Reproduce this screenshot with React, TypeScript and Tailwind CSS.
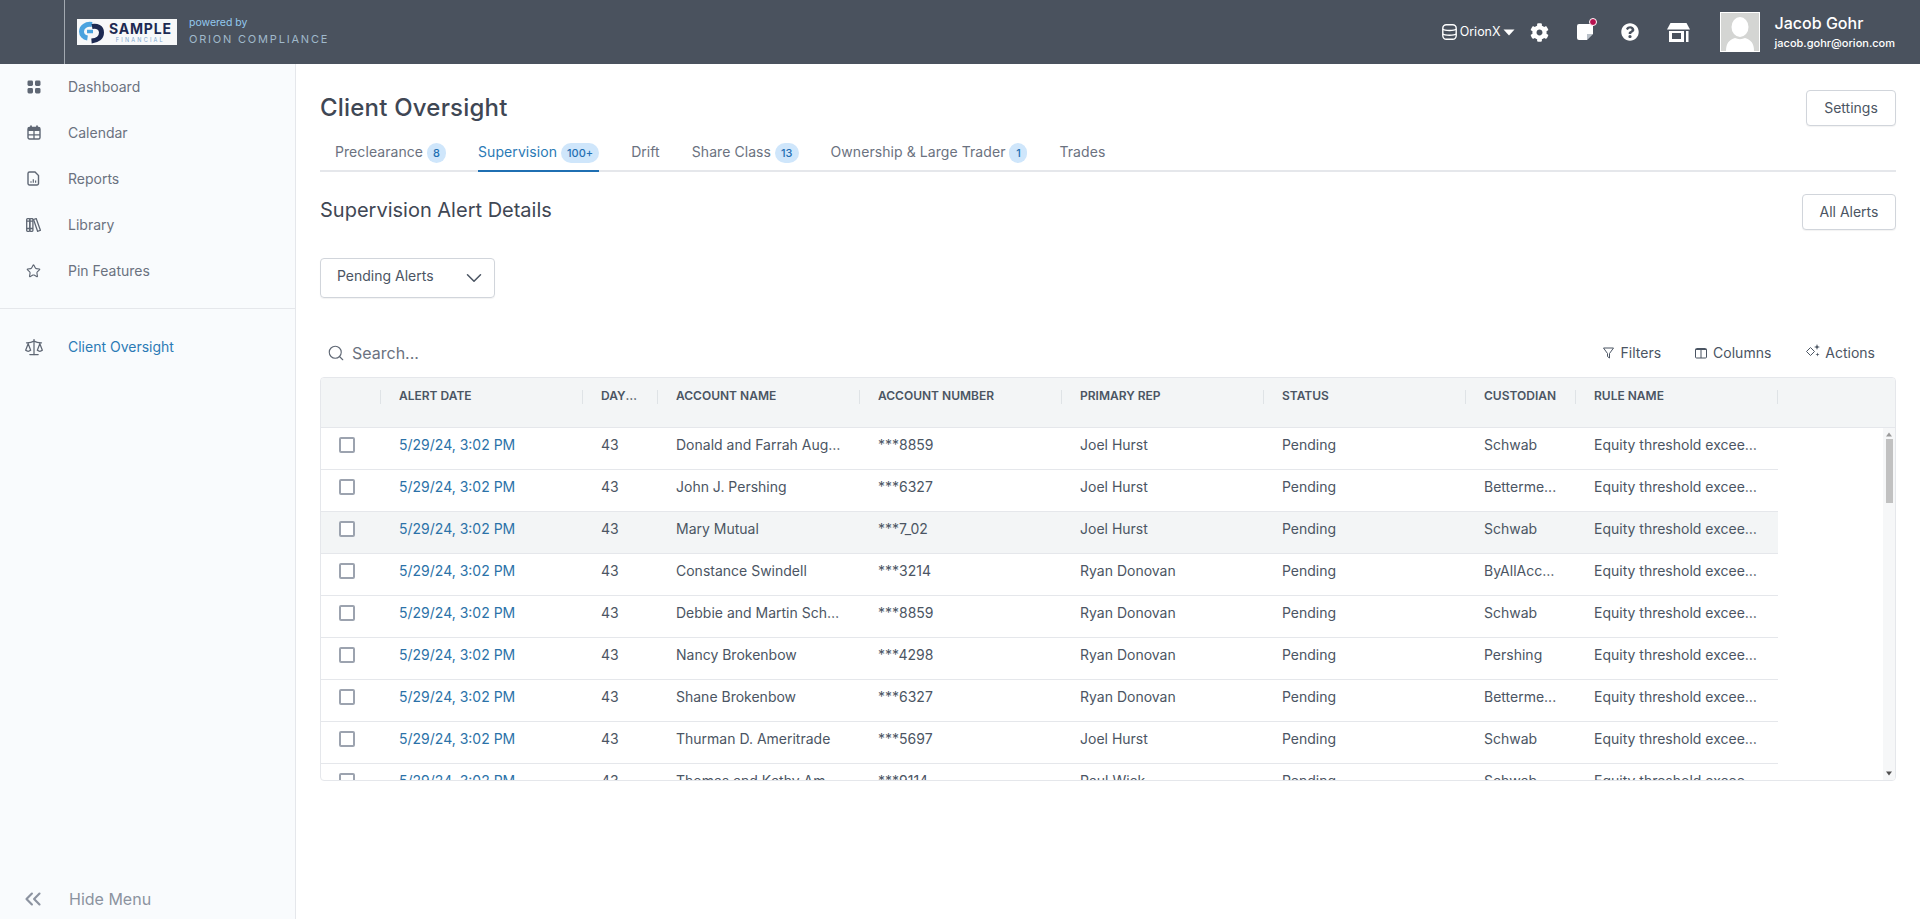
import { ChevronDown, ChevronsLeft, Search, Star, Scale } from "lucide-react";
import { FaCog, FaQuestionCircle } from "react-icons/fa";

const NAV = [
  { label: "Dashboard", icon: <DashIcon /> },
  { label: "Calendar", icon: <CalIcon /> },
  { label: "Reports", icon: <ReportIcon /> },
  { label: "Library", icon: <LibIcon /> },
  { label: "Pin Features", icon: <Star size={16} strokeWidth={1.8} /> },
];

const TABS = [
  { label: "Preclearance", badge: "8" },
  { label: "Supervision", badge: "100+", active: true },
  { label: "Drift" },
  { label: "Share Class", badge: "13" },
  { label: "Ownership & Large Trader", badge: "1" },
  { label: "Trades" },
];

const COLS = [
  { label: "Alert Date", w: "w-[202px]" },
  { label: "Days Pending", w: "w-[75px]" },
  { label: "Account Name", w: "w-[202px]" },
  { label: "Account Number", w: "w-[202px]" },
  { label: "Primary Rep", w: "w-[202px]" },
  { label: "Status", w: "w-[202px]" },
  { label: "Custodian", w: "w-[110px]" },
  { label: "Rule Name", w: "w-[202px]" },
];

const ROWS = [
  ["Donald and Farrah Augustine", "***8859", "Joel Hurst", "Schwab"],
  ["John J. Pershing", "***6327", "Joel Hurst", "Betterme..."],
  ["Mary Mutual", "***7_02", "Joel Hurst", "Schwab"],
  ["Constance Swindell", "***3214", "Ryan Donovan", "ByAllAccounts"],
  ["Debbie and Martin Schwab", "***8859", "Ryan Donovan", "Schwab"],
  ["Nancy Brokenbow", "***4298", "Ryan Donovan", "Pershing"],
  ["Shane Brokenbow", "***6327", "Ryan Donovan", "Betterme..."],
  ["Thurman D. Ameritrade", "***5697", "Joel Hurst", "Schwab"],
  ["Thomas and Kathy Ameritrade", "***9114", "Paul Wick", "Schwab"],
];

function DashIcon() {
  return (
    <svg width="14" height="14" viewBox="0 0 14 14" fill="currentColor">
      <rect x="0.5" y="0.5" width="5.5" height="5.5" rx="1.4" />
      <rect x="8" y="0.5" width="5.5" height="5.5" rx="1.4" />
      <rect x="0.5" y="8" width="5.5" height="5.5" rx="1.4" />
      <rect x="8" y="8" width="5.5" height="5.5" rx="1.4" />
    </svg>
  );
}

function CalIcon() {
  return (
    <svg width="14" height="15" viewBox="0 0 14 15" fill="none" stroke="currentColor">
      <rect x="1" y="2.5" width="12" height="11.500" rx="1.500" strokeWidth="1.400" />
      <path d="M1 2.800h12v3.200H1z" fill="currentColor" stroke="none" />
      <path d="M4 0.500v3M10 0.500v3" strokeWidth="1.800" />
      <path d="M1 9.800h12M7 5.500v8.500" strokeWidth="1.300" />
    </svg>
  );
}

function ReportIcon() {
  return (
    <svg width="13" height="15" viewBox="0 0 13 15" fill="none" stroke="currentColor" strokeWidth="1.400">
      <path d="M2.500 1h5.500l3.500 3.500v8a1.500 1.500 0 0 1-1.500 1.500H2.500A1.500 1.500 0 0 1 1 12.500V2.500A1.500 1.500 0 0 1 2.500 1z" />
      <path d="M4 11.800v-1.600M6.300 11.800V8.200M8.600 11.800V9.500" strokeWidth="1.200" />
    </svg>
  );
}

function LibIcon() {
  return (
    <svg width="15" height="14" viewBox="0 0 15 14" fill="none" stroke="currentColor" strokeWidth="1.300">
      <rect x="0.700" y="0.700" width="3.100" height="12.600" rx="0.800" />
      <rect x="3.800" y="0.700" width="3.100" height="12.600" rx="0.800" />
      <path d="M7.500 1.500l2.700-0.900 4.200 11.700-2.800 1z" />
      <path d="M0.700 3.200h6.200M0.700 10.500h6.200" />
    </svg>
  );
}

function Logo() {
  return (
    <div className="flex h-[26px] w-[100px] items-center gap-[4px] bg-[#f7f8f9] pl-[1px]">
      <svg width="27" height="24" viewBox="0 0 27 24" className="shrink-0" fill="none">
        <path d="M14 4.500C8 3.500 3.500 7 3.500 11.500c0 3.500 2.500 6 6 6.500" stroke="#4aa3df" strokeWidth="5" />
        <path d="M14 6.500c5-1 9.500 1 9.500 6 0 5-4 8-10 8.500" stroke="#1d2a52" strokeWidth="5" />
        <path d="M9 11.500h6" stroke="#4aa3df" strokeWidth="3.500" />
      </svg>
      <div className="flex flex-col items-center leading-none">
        <span className="text-[14px] font-bold leading-[15px] tracking-[0.800px] text-[#1d2a52]">SAMPLE</span>
        <span className="mt-[1px] text-[5.500px] leading-[6px] tracking-[2.200px] text-[#7aa6d0]">FINANCIAL</span>
      </div>
    </div>
  );
}

function TopBar() {
  return (
    <header className="flex h-[64px] shrink-0 items-center bg-[#4a525e] text-white">
      <div className="h-full w-[65px] shrink-0 border-r border-[#a3a9b1]" />
      <div className="ml-[12px]"><Logo /></div>
      <div className="-mt-[3px] ml-[12px] flex flex-col">
        <span className="text-[10.500px] leading-[14px] text-[#93c9ee]">powered by</span>
        <span className="mt-[2px] text-[11px] leading-[14px] tracking-[1.800px] text-[#a0b9cb]">ORION COMPLIANCE</span>
      </div>
      <div className="ml-auto flex items-center">
        <svg width="15" height="16" viewBox="0 0 15 16" fill="none" stroke="#fff" strokeWidth="1.400">
          <rect x="0.800" y="0.800" width="13.400" height="14.400" rx="3.500" />
          <path d="M0.800 5.300c2 1.600 11.400 1.600 13.400 0M0.800 10c2 1.600 11.400 1.600 13.400 0" />
        </svg>
        <span className="ml-[3px] text-[12.500px]">OrionX</span>
        <svg width="12" height="7" viewBox="0 0 12 7" className="ml-[2px]" fill="#fff"><path d="M0.500 0.500h11L6 6.500z" /></svg>
        <FaCog size={19} className="ml-[15px]" />
        <div className="relative ml-[28px] h-[16px] w-[16px] rounded-[2px] bg-white">
          <svg width="6" height="6" viewBox="0 0 6 6" className="absolute bottom-0 right-0"><path d="M0 0h6L0 6z" fill="#b9c0c8" /><path d="M6 0v6H0z" fill="#4a525e" /></svg>
          <span className="absolute right-[-4px] top-[-6px] h-[8px] w-[8px] rounded-full border border-white bg-[#b8114f]" />
        </div>
        <FaQuestionCircle size={18} className="ml-[28px]" />
        <svg width="23" height="19" viewBox="0 0 23 19" className="ml-[28px]" fill="#fff">
          <path d="M3.500 0h16L23 6.500H0z" />
          <path d="M2 8h15v11H2zM5 10v6h9v-6zM19 8h2.500v11H19z" fillRule="evenodd" />
        </svg>
        <div className="ml-[30px] flex h-[40px] w-[40px] items-end justify-center overflow-hidden border border-white bg-[#d4d5d3]">
          <svg width="38" height="38" viewBox="0 0 38 38" fill="#fff">
            <ellipse cx="19" cy="14" rx="8.500" ry="10" />
            <path d="M5 38c0-8 3-11 9-13 3 1.500 7 1.500 10 0 6 2 9 5 9 13z" />
          </svg>
        </div>
        <div className="ml-[15px] mr-[25px] flex flex-col">
          <span className="text-[16px] font-medium leading-[20px]">Jacob Gohr</span>
          <span className="mt-[2px] text-[11px] font-medium leading-[16px]">jacob.gohr@orion.com</span>
        </div>
      </div>
    </header>
  );
}

function SideBar() {
  return (
    <aside className="flex w-[296px] shrink-0 flex-col border-r border-[#e5e7eb] bg-[#f9fbfd]">
      {NAV.map((item) => (
        <div key={item.label} className="flex h-[46px] items-center pb-[1px] text-[14px] text-[#6b7280]">
          <span className="flex w-[68px] justify-center pr-[1px] text-[#5f6774]"><span className="flex w-[15px] justify-center">{item.icon}</span></span>
          <span>{item.label}</span>
        </div>
      ))}
      <div className="mt-[14px] border-t border-[#e5e7eb]" />
      <div className="mt-[15px] flex h-[46px] items-center pb-[1px] text-[14px] text-[#2b7ab5]">
        <span className="flex w-[68px] justify-center text-[#5f6774]"><Scale size={20} strokeWidth={1.500} /></span>
        <span>Client Oversight</span>
      </div>
      <div className="mt-auto flex h-[40px] items-center pb-[1px] text-[16px] text-[#8c93a0]">
        <span className="flex w-[69px] justify-center pr-[4px]"><ChevronsLeft size={26} strokeWidth={2} /></span>
        <span>Hide Menu</span>
      </div>
    </aside>
  );
}

function OutlineButton({ label, w }: { label: string; w: string }) {
  return (
    <button className={`h-[36px] rounded-[4px] border border-[#d1d5db] bg-white pb-[1px] text-[14px] text-[#4b5563] shadow-[0_1px_1px_rgba(0,0,0,0.05)] ${w}`}>
      {label}
    </button>
  );
}

function Tabs() {
  return (
    <div className="mt-[15px] flex h-[31px] border-b-2 border-[#e5e7eb]">
      {TABS.map((t) => (
        <div
          key={t.label}
          className={`-mb-[2px] mx-[16px] flex h-[31px] items-start gap-[4px] border-b-2 pt-[1px] text-[14px] leading-[20px] tracking-[0.07px] first:ml-[15px] ${t.active ? "border-[#1f6fb2] text-[#2b7ab5]" : "border-transparent text-[#6b7280]"}`}
        >
          <span className="whitespace-nowrap">{t.label}</span>
          {t.badge && (
            <span className="mt-[1px] flex h-[20px] min-w-[18px] items-center justify-center rounded-full bg-[#cfe6fb] px-[6px] text-[11px] font-medium tracking-normal text-[#1f6fb2]">
              {t.badge}
            </span>
          )}
        </div>
      ))}
    </div>
  );
}

function ToolbarBtn({ icon, label, className }: { icon: React.ReactNode; label: string; className: string }) {
  return (
    <div className={`flex items-center text-[14px] text-[#4b5563] ${className}`}>
      {icon}
      <span>{label}</span>
    </div>
  );
}

function Toolbar() {
  return (
    <div className="mt-[36px] flex h-[37px] items-center">
      <Search size={18} strokeWidth={1.500} className="ml-[7px] text-[#5f6774]" />
      <span className="ml-[7px] text-[16px] text-[#6b7280]">Search...</span>
      <ToolbarBtn
        className="ml-auto"
        label="Filters"
        icon={<svg width="11" height="12" viewBox="0 0 11 12" className="mr-[7px]" fill="none" stroke="#4b5563"><path d="M0.500 1h10L6.500 6.500v4.500l-2-1.500v-3z" /></svg>}
      />
      <ToolbarBtn
        className="ml-[34px]"
        label="Columns"
        icon={<svg width="12" height="12" viewBox="0 0 12 12" className="mr-[6px]" fill="none" stroke="#4b5563"><rect x="0.500" y="1.500" width="11" height="9.500" rx="1" /><path d="M6 1.500v9.500M0.500 2.500h11" /></svg>}
      />
      <ToolbarBtn
        className="ml-[35px] mr-[21px]"
        label="Actions"
        icon={
          <svg width="15" height="14" viewBox="0 0 15 14" className="-mt-[3px] mr-[4px]">
            <path d="M4.500 3.500 8.500 7.500 4.500 11.500 0.500 7.500z" fill="none" stroke="#4b5563" />
            <path d="M11 0 11.800 2.200 14 3 11.800 3.800 11 6 10.200 3.800 8 3 10.200 2.200z" fill="#4b5563" />
            <path d="M11.500 8.500 12 10 13.500 10.500 12 11 11.500 12.500 11 11 9.500 10.500 11 10z" fill="#4b5563" />
          </svg>
        }
      />
    </div>
  );
}

function DataTable() {
  return (
    <div className="mt-[6px] flex h-[404px] flex-col overflow-hidden rounded-[4px] border border-[#e5e7eb] bg-white">
      <div className="flex h-[50px] shrink-0 border-b border-[#e5e7eb] bg-[#f3f5f6]">
        <div className="mt-[12px] h-[14px] w-[60px] shrink-0 border-r border-[#dfe3e6]" />
        {COLS.map((c) => (
          <div key={c.label} className={`relative shrink-0 pl-[18px] pr-[18px] pt-[9px] ${c.w}`}>
            <div className="truncate text-[12px] font-semibold uppercase leading-[18px] text-[#4b5563]">{c.label}</div>
            <span className="absolute right-0 top-[12px] h-[14px] w-px bg-[#dfe3e6]" />
          </div>
        ))}
      </div>
      <div className="flex min-h-0 flex-1">
        <div className="w-[1457px] shrink-0">
          {ROWS.map((r, i) => (
            <div key={i} className={`flex h-[42px] items-center border-b border-[#e5e7eb] pb-[8px] text-[14px] text-[#4b5563] ${i === 2 ? "bg-[#f3f5f6]" : ""}`}>
              <div className="w-[60px] shrink-0 pl-[18px]">
                <span className="block h-[16px] w-[16px] rounded-[2px] border-2 border-[#9ca3af] bg-white" />
              </div>
              <div className="w-[202px] shrink-0 pl-[18px] text-[#2b72a8]">5/29/24, 3:02 PM</div>
              <div className="w-[75px] shrink-0 pl-[18px]">43</div>
              <div className="w-[202px] shrink-0 truncate pl-[18px] pr-[18px]">{r[0]}</div>
              <div className="w-[202px] shrink-0 pl-[18px]">{r[1]}</div>
              <div className="w-[202px] shrink-0 pl-[18px]">{r[2]}</div>
              <div className="w-[202px] shrink-0 pl-[18px]">Pending</div>
              <div className="w-[110px] shrink-0 truncate pl-[18px] pr-[18px]">{r[3]}</div>
              <div className="w-[202px] shrink-0 truncate pl-[18px] pr-[18px]">Equity threshold exceeded</div>
            </div>
          ))}
        </div>
        <div className="flex-1" />
        <div className="flex w-[12px] shrink-0 flex-col items-center bg-[#f6f7f8]">
          <svg width="8" height="5" viewBox="0 0 8 5" className="mt-[4px]"><path d="M4 0.500 7 4.500H1z" fill="#9a9a9a" /></svg>
          <div className="mt-[2px] h-[64px] w-[7px] bg-[#c1c1c1]" />
          <svg width="8" height="5" viewBox="0 0 8 5" className="mb-[4px] mt-auto"><path d="M4 4.500 7 0.500H1z" fill="#505050" /></svg>
        </div>
      </div>
    </div>
  );
}

export default function App() {
  return (
    <div className="flex h-screen flex-col overflow-hidden bg-white font-['Inter',sans-serif]">
      <TopBar />
      <div className="flex min-h-0 flex-1">
        <SideBar />
        <main className="min-w-0 flex-1 px-[24px] pt-[26px]">
          <div className="flex items-center justify-between">
            <h1 className="-mt-[1px] text-[24px] font-medium leading-[32px] tracking-[0.2px] text-[#3f4754]">Client Oversight</h1>
            <OutlineButton label="Settings" w="w-[90px]" />
          </div>
          <Tabs />
          <div className="mt-[22px] flex items-start justify-between">
            <h2 className="text-[20px] leading-[32px] text-[#3f4754]">Supervision Alert Details</h2>
            <OutlineButton label="All Alerts" w="w-[94px]" />
          </div>
          <button className="mt-[28px] flex h-[40px] w-[175px] items-center justify-between rounded-[4px] border border-[#d1d5db] pb-[5px] pl-[16px] pr-[7px] text-[14px] text-[#4b5563] shadow-[0_1px_1px_rgba(0,0,0,0.05)]">
            <span>Pending Alerts</span>
            <ChevronDown size={26} strokeWidth={1.400} className="mt-[5px]" />
          </button>
          <Toolbar />
          <DataTable />
        </main>
      </div>
    </div>
  );
}
